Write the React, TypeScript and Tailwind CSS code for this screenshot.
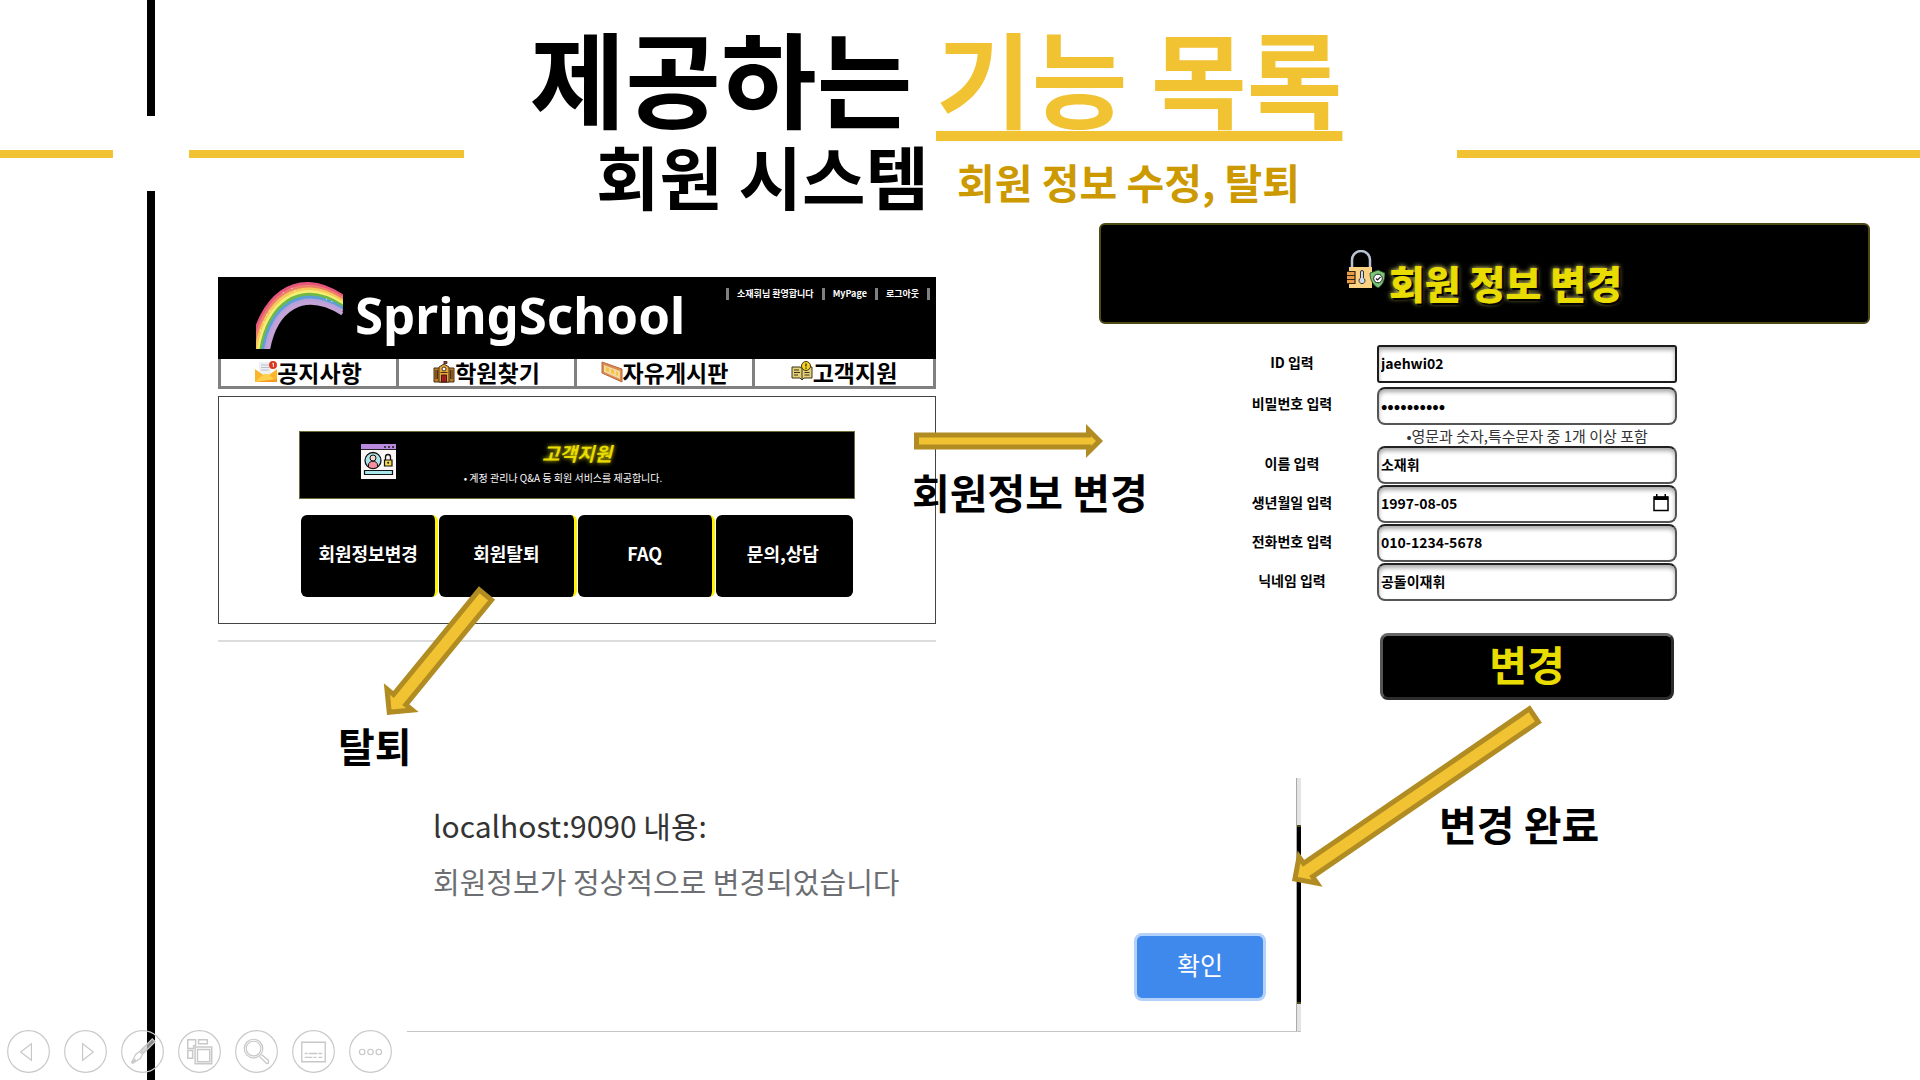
import React from "react";

const KR = "font-['Noto_Sans_CJK_KR','Noto_Sans',sans-serif]";

type Pt = [number, number];

/* ---------- block arrow drawn from a tail point to a tip point ---------- */
function Arrow({ from, to, width, height, shaft, head, className }: {
  from: Pt; to: Pt; width: number; height: number; shaft: number; head: number; className: string;
}) {
  const length = Math.hypot(to[0] - from[0], to[1] - from[1]);
  const angle = (Math.atan2(to[1] - from[1], to[0] - from[0]) * 180) / Math.PI;
  const s = shaft / 2 - 2.5;
  const h = head / 2 - 6;
  const base = length - head / 2 + 2.5;
  const points = [
    [2.5, -s], [base, -s], [base, -h], [length - 3.5, 0], [base, h], [base, s], [2.5, s],
  ].map((p) => p.join(",")).join(" ");
  return (
    <svg width={width} height={height} className={className} aria-hidden="true">
      <g transform={`translate(${from[0]} ${from[1]}) rotate(${angle})`}>
        <polygon points={points} fill="#f1c232" stroke="#b08c22" strokeWidth="5" />
      </g>
    </svg>
  );
}

/* ---------- illustrations ---------- */
const bands = ["#e8557f", "#ee7f6b", "#f6c85a", "#f4ee72", "#6fb944", "#5a9fd8", "#b8a0d8", "#c5a3d6"];

function Rainbow() {
  const outer = [122, 235, 140, 90, 250, -32, 402, 74];
  const inner = [178, 238, 200, 120, 280, 60, 398, 132];
  return (
    <svg viewBox="138 30 262 205" className="h-[68px] w-[87px]" aria-hidden="true">
      {bands.map((color, i) => {
        const t = (i + 0.5) / bands.length;
        const p = outer.map((v, k) => v + (inner[k] - v) * t);
        return (
          <path key={color} fill="none" stroke={color} strokeWidth="11"
            d={`M${p[0]} ${p[1]} C${p[2]} ${p[3]} ${p[4]} ${p[5]} ${p[6]} ${p[7]}`} />
        );
      })}
      <g fill="#fff" opacity="0.75">
        <circle cx="170" cy="132" r="2" /><circle cx="180" cy="120" r="2" /><circle cx="162" cy="155" r="2" />
        <circle cx="220" cy="65" r="2" /><circle cx="246" cy="52" r="2" /><circle cx="255" cy="60" r="2" />
        <circle cx="350" cy="85" r="2" /><circle cx="366" cy="92" r="2" /><circle cx="152" cy="180" r="2" />
      </g>
    </svg>
  );
}

function MailIcon() {
  return (
    <svg viewBox="0 0 22 22" className="size-[22px]" aria-hidden="true">
      <path d="M4 1h12v14H4z" fill="#eef1f4" />
      <path d="M6 4h8M6 6.500h8M6 9h8" stroke="#b9c0c8" />
      <path d="M0 8l11 8 11-8v13H0z" fill="#fbb62b" />
      <path d="M0 21l9-8h4l9 8z" fill="#ffd04c" />
      <path d="M0 21l22 0v-3z" fill="#f79a1c" />
      <circle cx="18" cy="4" r="4" fill="#d93a20" />
      <path d="M17.200 3l1.200-.8v3.800" stroke="#fff" fill="none" strokeWidth=".9" />
    </svg>
  );
}

function SchoolIcon() {
  return (
    <svg viewBox="0 0 22 22" className="size-[22px]" aria-hidden="true">
      <path d="M11 0v4M11 .5h3v2h-3" stroke="#222" fill="#c33" strokeWidth=".8" />
      <path d="M1 7h20v14H1z" fill="#b97a2c" stroke="#4a3217" />
      <path d="M6 6l5-3 5 3v15H6z" fill="#e6a83a" stroke="#4a3217" />
      <circle cx="11" cy="8" r="2" fill="#fff" stroke="#4a3217" />
      <path d="M8.500 14h5v7h-5z" fill="#b51f24" stroke="#4a1512" />
      <path d="M11 14v7M3 9v9M4.500 9v9M17.500 9v9M19 9v9" stroke="#4a3217" />
      <path d="M7.500 11.500h7" stroke="#4a3217" />
    </svg>
  );
}

function BoardIcon() {
  return (
    <svg viewBox="0 0 22 22" className="size-[22px]" aria-hidden="true">
      <path d="M1 1l20 7v13L1 12z" fill="#d98b52" stroke="#b96a3c" />
      <path d="M3 4l16 6v8L3 11z" fill="#f3d8a0" />
      <path d="M5 6l3 1v4l-3-1zM10 8l3 1v4l-3-1zM15 10l2 1v4l-2-1z" fill="#f5c542" />
    </svg>
  );
}

function GuideIcon() {
  return (
    <svg viewBox="0 0 22 22" className="size-[22px]" aria-hidden="true">
      <path d="M1 6h8l2 1 2-1h8v11h-8l-2 2-2-2H1z" fill="#e4cf7a" stroke="#3a3418" />
      <path d="M11 7v11M3 9h5M3 11.500h6M3 14h4M13.500 11.500h5M13.500 14h5" stroke="#3a3418" />
      <circle cx="15" cy="5" r="4.500" fill="#f6d21f" stroke="#3a3418" />
      <path d="M15 2.500v3M15 6.500v1.200" stroke="#222" strokeWidth="1.300" />
    </svg>
  );
}

function AccountIcon() {
  return (
    <svg viewBox="0 0 35 35" className="size-[35px]" aria-hidden="true">
      <path d="M0 0h35v35H0z" fill="#fdf6f6" />
      <path d="M0 0h35v5H0z" fill="#b98ae0" />
      <path d="M0 5.500h35" stroke="#222" />
      <path d="M23 3h2M27 3h2M31 3h2" stroke="#222" strokeWidth="1.500" />
      <circle cx="12" cy="16.500" r="8" fill="#a8e4ea" stroke="#111" strokeWidth="1.300" />
      <path d="M7.500 23v-2c0-5 9-5 9 0v2c-3 2-6 2-9 0z" fill="#f58fa0" stroke="#111" />
      <circle cx="12" cy="14" r="3" fill="#fbd5c6" stroke="#111" />
      <path d="M24.500 16v-3a2.500 2.500 0 0 1 5 0v3" fill="none" stroke="#111" strokeWidth="1.300" />
      <path d="M23.500 16h7.500v6h-7.500z" fill="#f5dc4d" stroke="#111" strokeWidth="1.200" />
      <circle cx="27.200" cy="18.700" r="1" fill="#111" />
      <path d="M3.500 26.500h28v4h-28z" fill="#a8e4ea" stroke="#111" strokeWidth="1.200" />
    </svg>
  );
}

function LockIcon() {
  return (
    <svg viewBox="0 0 38 38" className="size-[38px]" aria-hidden="true">
      <path d="M5 17V10a9 9 0 0 1 18 0v7" fill="none" stroke="#b9c3d3" strokeWidth="2.500" />
      <path d="M2 17h23v21H2z" fill="#fbd184" />
      <path d="M0 21h8v13H0z" fill="#e69a4c" />
      <path d="M0 21.500h8M0 25.500h8M0 29.500h8M0 33.500h8M8 21v13" stroke="#3a2710" strokeWidth="1.200" />
      <path d="M13.500 22a1.500 1.500 0 0 1 3 0v6a3 3 0 1 1-3 0z" fill="#cfd8e6" stroke="#333" />
      <path d="M23 23l8-3 7 3c0 7-2 12-7 15-5-3-8-8-8-15z" fill="#7cc47a" stroke="#1e3d20" strokeWidth=".8" />
      <circle cx="31" cy="28.500" r="4.300" fill="#fff" stroke="#222" />
      <path d="M29 28.500l1.500 1.500 3-3" stroke="#222" fill="none" strokeWidth="1.200" />
    </svg>
  );
}

/* ---------- school site panel ---------- */
const navItems = [
  { label: "공지사항", Icon: MailIcon },
  { label: "학원찾기", Icon: SchoolIcon },
  { label: "자유게시판", Icon: BoardIcon },
  { label: "고객지원", Icon: GuideIcon },
];

function SitePanel() {
  return (
    <section aria-label="SpringSchool">
      <header className="flex h-[82px] items-start bg-black text-white">
        <div className="ml-[38px] mt-1"><Rainbow /></div>
        <div className="ml-3 mt-1 font-['Noto_Sans',sans-serif] text-[51px] font-bold leading-[66px]">SpringSchool</div>
        <div className="ml-auto mr-[6px] mt-[11px] flex h-3 items-center gap-2 whitespace-nowrap text-[9px] font-bold leading-3">
          <span className="h-3 w-[3px] bg-[#808080]" />
          <span>소재휘님 환영합니다</span>
          <span className="h-3 w-[3px] bg-[#808080]" />
          <a href="#mypage">MyPage</a>
          <span className="h-3 w-[3px] bg-[#808080]" />
          <a href="#logout">로그아웃</a>
          <span className="h-3 w-[3px] bg-[#808080]" />
        </div>
      </header>
      <nav className="grid grid-cols-4 divide-x-[3px] divide-[#808080] border-x-[3px] border-b-[3px] border-[#808080]">
        {navItems.map(({ label, Icon }) => (
          <a key={label} href="#menu" className="flex h-[27px] items-center justify-center whitespace-nowrap pb-[2px] text-[23px] font-bold leading-[24px]">
            <Icon />
            <span>{label}</span>
          </a>
        ))}
      </nav>
      <div className="mt-[7px] h-[228px] border border-[#444] px-[80px] pt-[34px]">
        <div className="relative flex h-[68px] flex-col items-center border border-[#6e6a3a] bg-black pt-2 text-white">
          <div className="absolute left-[61px] top-3"><AccountIcon /></div>
          <h3 className="text-[19px] font-bold italic leading-[26px] text-[#e8dc00] [text-shadow:0_0_4px_#e8dc00]">고객지원</h3>
          <p className="pr-7 pt-1 text-[10px] leading-[16px]">• 계정 관리나 Q&amp;A 등 회원 서비스를 제공합니다.</p>
        </div>
        <div className="mt-4 grid grid-cols-4 gap-px px-[2px]">
          {["회원정보변경", "회원탈퇴", "FAQ", "문의,상담"].map((label) => (
            <button key={label} type="button"
              className="h-[82px] rounded-[6px] border-r-[3px] border-[#fff200] bg-black pb-[6px] text-[18px] font-bold text-white last:border-black">
              {label}
            </button>
          ))}
        </div>
      </div>
      <hr className="mt-4 border-t-2 border-[#dcdcdc]" />
    </section>
  );
}

/* ---------- member edit form ---------- */
const fieldBase =
  "h-[38px] w-full border-2 bg-white pl-[2px] pb-[2px] font-bold text-black shadow-[inset_0_3px_4px_#aaa] outline-none";
const fieldClass = `${fieldBase} rounded-[8px] border-[#555] border-t-[#222] text-[14px]`;
const labelClass = "justify-self-center pb-[4px] text-[14px] font-bold leading-[20px] whitespace-nowrap";

function EditForm() {
  return (
    <section className="min-w-0">
      <div className="flex h-[101px] items-start justify-center rounded-[6px] border-2 border-[#4d4a16] bg-black pt-[25px]">
        <LockIcon />
        <h2 className="ml-1 whitespace-nowrap pt-1 text-[39px] font-black leading-[56px] text-[#e8dc00] [text-shadow:2px_2px_1px_#000,0_0_5px_#fff27a]">
          회원 정보 변경
        </h2>
      </div>
      <form onSubmit={(e) => e.preventDefault()}
        className="ml-[14%] mr-[25%] mt-[21px] grid grid-cols-[170px_minmax(0,1fr)] items-center gap-y-px">
        <label htmlFor="uid" className={labelClass}>ID 입력</label>
        <input id="uid" defaultValue="jaehwi02" className={`${fieldBase} rounded-[3px] border-[#1c1c1c] text-[14px]`} />
        <label htmlFor="pw" className={labelClass}>비밀번호 입력</label>
        <input id="pw" type="password" defaultValue="abcd123456"
          className={`${fieldBase} mt-[3px] rounded-[8px] border-[#555] border-t-[#222] text-[17px]`} />
        <p className="col-start-2 justify-self-center whitespace-nowrap text-[15px] leading-[19px] text-[#333]">
          •영문과 숫자,특수문자 중 1개 이상 포함
        </p>
        <label htmlFor="name" className={labelClass}>이름 입력</label>
        <input id="name" defaultValue="소재휘" className={fieldClass} />
        <label htmlFor="birth" className={labelClass}>생년월일 입력</label>
        <div className="relative">
          <input id="birth" defaultValue="1997-08-05" className={fieldClass} />
          <button type="button" aria-label="날짜 선택" className="absolute right-2 top-[9px]">
            <svg viewBox="0 0 16 18" className="h-[18px] w-4" aria-hidden="true">
              <path d="M1 3h14v13.500H1z" fill="none" stroke="#000" strokeWidth="1.500" />
              <path d="M1 2.500h14V6H1zM3 0h1.500v3H3zM11.500 0H13v3h-1.500z" />
            </svg>
          </button>
        </div>
        <label htmlFor="phone" className={labelClass}>전화번호 입력</label>
        <input id="phone" defaultValue="010-1234-5678" className={fieldClass} />
        <label htmlFor="nick" className={labelClass}>닉네임 입력</label>
        <input id="nick" defaultValue="공돌이재휘" className={fieldClass} />
        <button type="submit"
          className="col-start-2 mx-[3px] mt-[31px] h-[67px] rounded-[8px] border-[3px] border-[#2c2c2c] border-l-[#555] border-t-[#666] bg-black pb-2 text-[41px] font-bold leading-[50px] text-[#e8dc00]">
          변경
        </button>
      </form>
    </section>
  );
}

/* ---------- browser alert ---------- */
function AlertDialog() {
  return (
    <section role="alertdialog" aria-labelledby="alert-title" className="flex h-[254px] min-w-0 border-b border-[#c4c4c4]">
      <div className="flex flex-1 flex-col pl-[26px] pr-[30px] pt-[25px]">
        <h3 id="alert-title" className="text-[30px] leading-[44px] text-[#333]">localhost:9090 내용:</h3>
        <p className="mt-3 text-[29px] leading-[44px] text-[#6d6e72]">회원정보가 정상적으로 변경되었습니다</p>
        <button type="button"
          className="mt-[30px] h-[68px] w-[132px] self-end rounded-[8px] border-[3px] border-[#b3d1fa] bg-[#3f89ec] pb-1 text-[25px] text-white">
          확인
        </button>
      </div>
      <div className="flex w-[5px] flex-col border-l border-[#aaa] bg-[#e4e4e4] pb-[27px] pt-[47px]">
        <div className="flex-1 border-y-2 border-[#4d4a16] bg-black" />
      </div>
    </section>
  );
}

/* ---------- slide show controls ---------- */
const controls: { name: string; art: React.ReactNode }[] = [
  { name: "이전", art: <path d="M25 14v17L14 22.500z" /> },
  { name: "다음", art: <path d="M19 14v17l11-8.500z" /> },
  {
    name: "펜",
    art: (
      <>
        <path d="M20 21L32 9l3 3-12 12z" fill="#c8c8c8" fillOpacity=".7" />
        <path d="M19 22l3 3-2 4-8 5-1-1 4-8z" /><path d="M11 34l4-4" strokeWidth="2" />
      </>
    ),
  },
  {
    name: "모든 슬라이드",
    art: (
      <>
        <path d="M10 10h8l0 6h-2v3h-6zM21 10h9v4h-9zM10 21h5v8h-5z" strokeWidth="1.500" />
        <path d="M17.500 17.500h17v17h-17z" strokeWidth="1.500" /><path d="M20 20h12.500v12.500H20z" strokeWidth="1.500" />
      </>
    ),
  },
  {
    name: "확대",
    art: (
      <>
        <circle cx="19" cy="19" r="9.500" /><circle cx="19" cy="19" r="7.500" />
        <path d="M25 27l7 7c2 1 3-1 2-3l-7-6" strokeWidth="1.400" />
      </>
    ),
  },
  {
    name: "자막",
    art: (
      <>
        <path d="M10 12.500h24v20H10z" strokeWidth="1.400" />
        <path d="M13 24h3M17 24h9M27 24h4M13 28h8M22 28h3M27 28h4" strokeWidth="1.400" />
      </>
    ),
  },
  { name: "더 보기", art: <><circle cx="13.500" cy="22.500" r="2.800" /><circle cx="22" cy="22.500" r="2.800" /><circle cx="30.500" cy="22.500" r="2.800" /></> },
];

function SlideControls() {
  return (
    <div className="absolute bottom-[7px] left-[7px] z-20 flex gap-[14px]">
      {controls.map(({ name, art }) => (
        <button key={name} type="button" aria-label={name} className="size-[43px]">
          <svg viewBox="0 0 44 44" className="size-full" fill="none" stroke="#c8c8c8" strokeWidth="1.200" aria-hidden="true">
            <circle cx="22" cy="22" r="21.300" />
            {art}
          </svg>
        </button>
      ))}
    </div>
  );
}

export default function App() {
  return (
    <div className={`relative min-h-screen overflow-hidden bg-white text-black ${KR}`}>
      <div className="absolute left-[147px] top-0 h-[116px] w-2 bg-black" />
      <div className="absolute bottom-0 left-[147px] top-[191px] w-2 bg-black" />
      <div className="absolute left-0 top-[150px] h-2 w-[113px] bg-[#f1c232]" />
      <div className="absolute left-[189px] top-[150px] h-2 w-[275px] bg-[#f1c232]" />
      <div className="absolute right-0 top-[150px] h-2 w-[463px] bg-[#f1c232]" />

      <header className="relative flex flex-col items-center whitespace-nowrap pr-[48px] pt-[22px] font-bold">
        <h1 className="text-[104px] leading-[108px]">
          제공하는{" "}
          <span className="text-[#f1c232] underline decoration-[10px] underline-offset-[10px] [text-decoration-skip-ink:none]">기능 목록</span>
        </h1>
        <div className="ml-6 mt-[10px] flex items-end gap-[28px]">
          <h2 className="text-[69px] leading-[70px]">회원 시스템</h2>
          <p className="text-[41px] leading-[58px] text-[#cc9900]">회원 정보 수정, 탈퇴</p>
        </div>
      </header>

      <main className="relative mt-[13px]">
        <div className="grid grid-cols-[minmax(0,718fr)_minmax(0,163fr)_minmax(0,771fr)] pl-[218px] pr-[50px]">
          <div className="relative pt-[54px]">
            <SitePanel />
            <p className="ml-[120px] mt-[76px] text-[40px] font-bold leading-[54px]">탈퇴</p>
            <Arrow from={[107, 13]} to={[7, 135]} width={130} height={150} shaft={21} head={45}
              className="absolute left-[162px] top-[357px]" />
          </div>
          <div className="relative z-10 -ml-[24px] flex flex-col pt-[200px]">
            <Arrow from={[2, 18]} to={[191, 18]} width={194} height={36} shaft={17} head={34} className="shrink-0" />
            <p className="mt-[5px] whitespace-nowrap text-[41px] font-bold leading-[54px]">회원정보 변경</p>
          </div>
          <EditForm />
        </div>
        <div className="relative mt-[6px] grid grid-cols-[minmax(0,894fr)_minmax(0,619fr)] pl-[407px]">
          <AlertDialog />
          <div className="relative">
            <p className="ml-[138px] mt-[18px] text-[41px] font-bold leading-[54px]">변경 완료</p>
            <Arrow from={[250, 20]} to={[6, 187]} width={270} height={200} shaft={21} head={44}
              className="absolute -left-[15px] -top-[84px]" />
          </div>
        </div>
      </main>

      <SlideControls />
    </div>
  );
}
